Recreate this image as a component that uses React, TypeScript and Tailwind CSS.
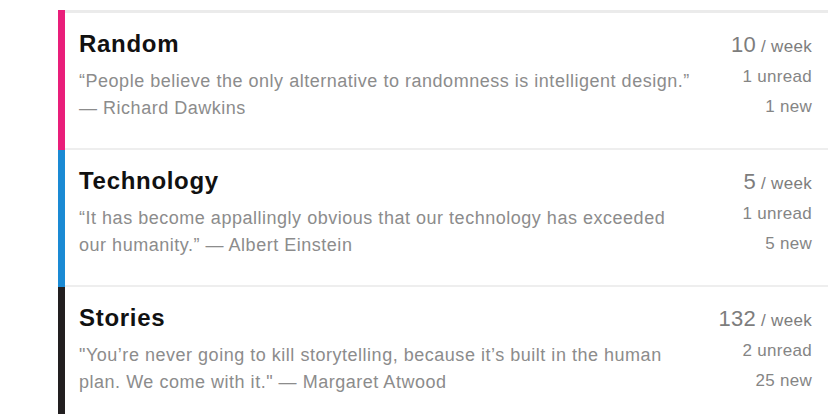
import { Fragment } from "react";

type Feed = {
  name: string;
  bar: string;
  perWeek: number;
  unread: number;
  fresh: number;
  quote: string[];
};

const feeds: Feed[] = [
  {
    name: "Random",
    bar: "bg-[#e91e7a]",
    perWeek: 10,
    unread: 1,
    fresh: 1,
    quote: [
      "“People believe the only alternative to randomness is intelligent design.”",
      "— Richard Dawkins",
    ],
  },
  {
    name: "Technology",
    bar: "bg-[#1a8ad4]",
    perWeek: 5,
    unread: 1,
    fresh: 5,
    quote: [
      "“It has become appallingly obvious that our technology has exceeded",
      "our humanity.” — Albert Einstein",
    ],
  },
  {
    name: "Stories",
    bar: "bg-[#221f20]",
    perWeek: 132,
    unread: 2,
    fresh: 25,
    quote: [
      "\"You’re never going to kill storytelling, because it’s built in the human",
      "plan. We come with it.\" — Margaret Atwood",
    ],
  },
];

function FeedRow({ feed, first }: { feed: Feed; first: boolean }) {
  return (
    <div className="flex">
      <div className={`w-[7px] shrink-0 ${feed.bar}`} />
      <div
        className={`flex-1 border-b-2 border-[#eeeeee] pl-[14px] pr-4 pt-[17px] pb-[26px] ${
          first ? "border-t-[3px] border-t-[#ebebeb]" : ""
        }`}
      >
        <div className="flex h-[28px] items-baseline justify-between">
          <h2 className="text-[24px] font-bold leading-[28px] tracking-[0.7px] text-[#111]">
            {feed.name}
          </h2>
          <div className="text-[22px] leading-[22px] tracking-[0.3px] text-[#7d7d7d]">
            {feed.perWeek}
            <span className="text-[17px]"> / week</span>
          </div>
        </div>
        <div className="flex items-start justify-between">
          <p className="mt-[10px] text-[18px] leading-[27px] tracking-[0.52px] text-[#8c8c8c]">
            {feed.quote.map((line, i) => (
              <Fragment key={i}>
                {i > 0 && <br />}
                {line}
              </Fragment>
            ))}
          </p>
          <div className="mt-1 text-right text-[17px] leading-[30px] tracking-[0.3px] text-[#858585]">
            <div>{feed.unread} unread</div>
            <div>{feed.fresh} new</div>
          </div>
        </div>
      </div>
    </div>
  );
}

export default function App() {
  return (
    <div
      className="h-[414px] w-[828px] overflow-hidden bg-white pt-[10px] pl-[58px]"
      style={{ fontFamily: '"Liberation Sans", Arial, sans-serif' }}
    >
      {feeds.map((f, i) => (
        <FeedRow key={f.name} feed={f} first={i === 0} />
      ))}
    </div>
  );
}
